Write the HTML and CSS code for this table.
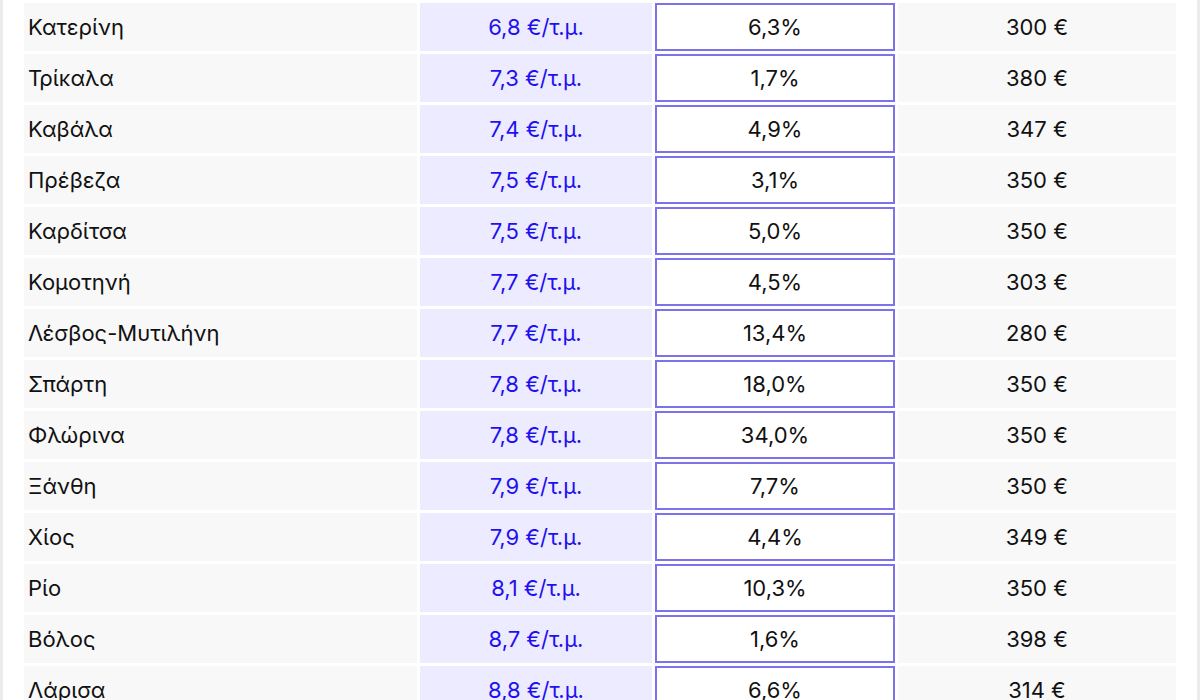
FILE: index.html
```html
<!DOCTYPE html>
<html lang="el">
<head>
  <meta charset="UTF-8">
  <title>Τιμές ενοικίων ανά πόλη</title>
  <link rel="stylesheet" href="styles.css">
</head>
<body>

  <div class="frame">
    <table class="prices">
      <colgroup>
        <col class="c-city">
        <col class="c-sqm">
        <col class="c-change">
        <col class="c-rent">
      </colgroup>
      <tbody>
        <tr><td class="city">Κατερίνη</td><td class="sqm">6,8 €/τ.μ.</td><td class="change">6,3%</td><td class="rent">300 €</td></tr>
        <tr><td class="city">Τρίκαλα</td><td class="sqm">7,3 €/τ.μ.</td><td class="change">1,7%</td><td class="rent">380 €</td></tr>
        <tr><td class="city">Καβάλα</td><td class="sqm">7,4 €/τ.μ.</td><td class="change">4,9%</td><td class="rent">347 €</td></tr>
        <tr><td class="city">Πρέβεζα</td><td class="sqm">7,5 €/τ.μ.</td><td class="change">3,1%</td><td class="rent">350 €</td></tr>
        <tr><td class="city">Καρδίτσα</td><td class="sqm">7,5 €/τ.μ.</td><td class="change">5,0%</td><td class="rent">350 €</td></tr>
        <tr><td class="city">Κομοτηνή</td><td class="sqm">7,7 €/τ.μ.</td><td class="change">4,5%</td><td class="rent">303 €</td></tr>
        <tr><td class="city">Λέσβος-Μυτιλήνη</td><td class="sqm">7,7 €/τ.μ.</td><td class="change">13,4%</td><td class="rent">280 €</td></tr>
        <tr><td class="city">Σπάρτη</td><td class="sqm">7,8 €/τ.μ.</td><td class="change">18,0%</td><td class="rent">350 €</td></tr>
        <tr><td class="city">Φλώρινα</td><td class="sqm">7,8 €/τ.μ.</td><td class="change">34,0%</td><td class="rent">350 €</td></tr>
        <tr><td class="city">Ξάνθη</td><td class="sqm">7,9 €/τ.μ.</td><td class="change">7,7%</td><td class="rent">350 €</td></tr>
        <tr><td class="city">Χίος</td><td class="sqm">7,9 €/τ.μ.</td><td class="change">4,4%</td><td class="rent">349 €</td></tr>
        <tr><td class="city">Ρίο</td><td class="sqm">8,1 €/τ.μ.</td><td class="change">10,3%</td><td class="rent">350 €</td></tr>
        <tr><td class="city">Βόλος</td><td class="sqm">8,7 €/τ.μ.</td><td class="change">1,6%</td><td class="rent">398 €</td></tr>
        <tr><td class="city">Λάρισα</td><td class="sqm">8,8 €/τ.μ.</td><td class="change">6,6%</td><td class="rent">314 €</td></tr>
      </tbody>
    </table>
  </div>

</body>
</html>
```

FILE: styles.css
```css
html, body {
  margin: 0;
  height: 100%;
  overflow: hidden;
  background: #fff;
}
body {
  font-family: Inter, "Noto Sans", sans-serif;
  font-size: 22px;
  color: #111;
}
.frame {
  border-left: 3px solid #ebebeb;
  border-right: 3px solid #ebebeb;
  padding: 0 15px 0 18px;
  min-height: 100%;
}
.prices {
  width: 1158px;
  table-layout: fixed;
  border-collapse: separate;
  border-spacing: 3px;
}
.c-city { width: 393px; }
.c-sqm { width: 232px; }
.c-change { width: 240px; }
.c-rent { width: 278px; }

.prices td {
  height: 48px;
  box-sizing: border-box;
  padding: 0 4px;
  text-align: center;
  background: #f8f8f8;
  white-space: nowrap;
}
.prices td.city {
  text-align: left;
}
.prices td.sqm {
  background: #ecebff;
  color: #1f10ee;
}
.prices td.change {
  background: #fff;
  border: 2px solid #7b72ec;
}
```
